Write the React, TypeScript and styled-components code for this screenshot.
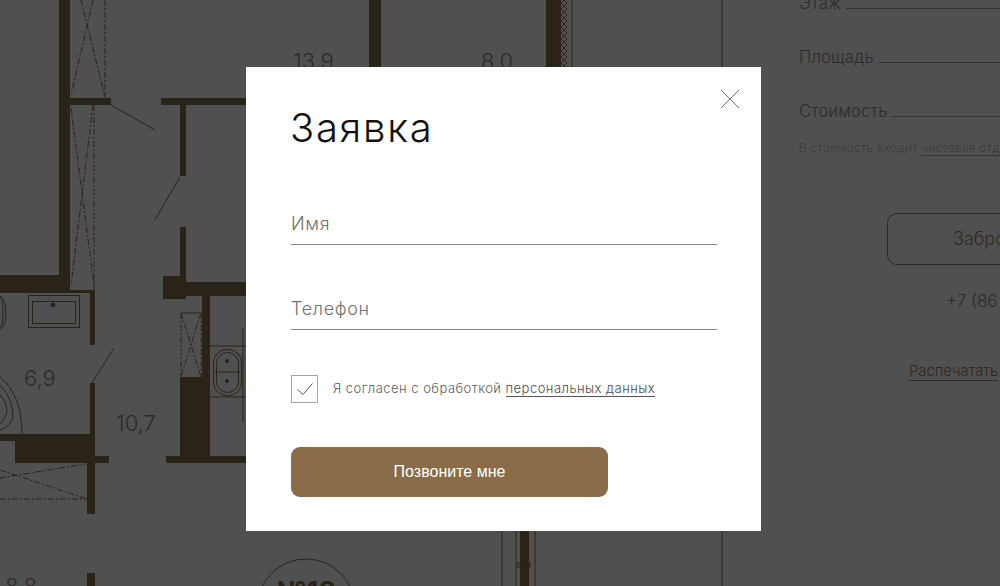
import React from "react";
import styled, { createGlobalStyle } from "styled-components";

const GlobalStyle = createGlobalStyle`
  html, body { margin: 0; padding: 0; background: #505050; }
  * { box-sizing: border-box; }
  body { font-family: "Inter", "Noto Sans", sans-serif; }
`;

const Page = styled.div`
  position: relative;
  display: flex;
  width: 1000px;
  height: 586px;
  overflow: hidden;
  background: #505050;
`;

const PlanSvg = styled.svg`
  display: block;
  flex: none;
  width: 723px;
  height: 586px;
`;

const Sidebar = styled.aside`
  flex: none;
  width: 277px;
  margin-top: -13px;
  padding-left: 76px;
  color: #2b2b2b;
`;

const SpecRow = styled.div`
  display: flex;
  align-items: flex-end;
  gap: 5px;
  width: 260px;
  height: 26px;
  margin-bottom: 28px;
  font-size: 16.6px;
  font-weight: 300;
  letter-spacing: 0.15px;
  white-space: nowrap;
`;

const SpecLine = styled.span`
  flex: 1;
  height: 1px;
  margin-bottom: 4px;
  background: #333;
`;

const Note = styled.p`
  width: 280px;
  margin: -9px 0 0;
  font-size: 12px;
  font-weight: 300;
  letter-spacing: 0.2px;
  line-height: 16px;
  color: #3c3c3c;
  white-space: nowrap;
`;

const NoteLink = styled.span`
  border-bottom: 1px solid #333;
`;

const BookButton = styled.div`
  width: 224px;
  height: 52px;
  margin: 57px 0 0 88px;
  padding-left: 65px;
  border: 1px solid #33291d;
  border-radius: 10px;
  font-size: 18px;
  font-weight: 300;
  line-height: 50px;
  color: #30281e;
  white-space: nowrap;
`;

const Phone = styled.div`
  margin: 26px 0 0 147px;
  font-size: 17px;
  font-weight: 300;
  line-height: 20px;
  white-space: nowrap;
`;

const PrintLink = styled.span`
  display: inline-block;
  margin: 52px 0 0 110px;
  border-bottom: 1px solid #33291d;
  font-size: 14.8px;
  font-weight: 300;
  line-height: 17px;
  color: #30281e;
  white-space: nowrap;
`;

const Overlay = styled.div`
  position: absolute;
  inset: 0;
  padding: 67px 0 0 246px;
`;

const Modal = styled.form`
  position: relative;
  width: 515px;
  height: 464px;
  padding: 36px 44px 0 45px;
  background: #fff;
`;

const CloseButton = styled.button`
  position: absolute;
  top: 22px;
  right: 21px;
  width: 20px;
  height: 20px;
  padding: 0;
  border: 0;
  background: none;
  color: #6f6f6f;
`;

const Title = styled.h1`
  margin: 0 0 49px -1px;
  font-size: 40px;
  font-weight: 300;
  line-height: 50px;
  letter-spacing: 1.7px;
  color: #111;
`;

const Field = styled.input`
  display: block;
  width: 100%;
  height: 43px;
  margin-bottom: 42px;
  padding: 0;
  border: 0;
  border-bottom: 1px solid #8a8a8a;
  outline: none;
  font-family: inherit;
  font-size: 18px;
  font-weight: 300;
  letter-spacing: 0.65px;
  &::placeholder { color: #707070; opacity: 1; }
`;

const Consent = styled.div`
  display: flex;
  align-items: center;
  gap: 15px;
  margin-top: 45px;
  font-size: 13px;
  font-weight: 300;
  letter-spacing: 0.48px;
  color: #5c5c5c;
  white-space: nowrap;
`;

const CheckBox = styled.span`
  display: flex;
  align-items: center;
  justify-content: center;
  flex: none;
  width: 27px;
  height: 28px;
  border: 1px solid #a5a5a5;
`;

const ConsentText = styled.span`
  margin-top: -2px;
`;

const ConsentLink = styled.span`
  border-bottom: 1px solid #555;
  color: #4a4a4a;
`;

const SubmitButton = styled.button`
  display: block;
  width: 317px;
  height: 50px;
  margin-top: 44px;
  border: 0;
  border-radius: 9px;
  background: #8a6d48;
  color: #fff;
  font-family: "Liberation Sans", Arial, sans-serif;
  font-size: 16px;
`;

const wall = "#2a2317";
const thin = "#2a2317";

const walls: [number, number, number, number][] = [
  [59, 0, 11, 293], [0, 275, 70, 18], [70, 98, 41, 7], [161, 98, 85, 7],
  [180, 105, 6, 71], [180, 227, 6, 58], [163, 276, 23, 23], [186, 282, 60, 14],
  [202, 295, 8, 85], [70, 290, 25, 3], [90, 290, 5, 55], [90, 383, 5, 52],
  [0, 434, 95, 7], [15, 434, 80, 29], [95, 456, 14, 7], [87, 463, 8, 51],
  [87, 573, 8, 13], [180, 377, 30, 86], [166, 456, 80, 7],
  [369, 0, 12, 67], [546, 0, 15, 67], [520, 531, 9, 55],
];

const dashedLines: [number, number, number, number][] = [
  [81, 0, 105, 97], [93, 0, 71, 95], [105, 0, 105, 97],
  [71, 108, 94, 285], [93, 105, 71, 285], [94, 105, 94, 290],
  [0, 478, 85, 464], [0, 470, 87, 499], [0, 499, 87, 499],
  [181, 313, 181, 377], [201, 313, 201, 377], [181, 313, 201, 377], [201, 313, 181, 377],
];

const solidLines: [number, number, number, number][] = [
  [111, 105, 155, 130], [180, 177, 155, 220], [92, 383, 114, 348],
  [181, 313, 201, 313], [210, 346, 246, 346], [210, 397, 246, 397], [243, 328, 243, 422],
  [572, 0, 572, 67], [722, 0, 722, 586],
  [502, 531, 502, 586], [516, 531, 516, 586], [535, 531, 535, 586],
];

const areas: [string, number, number][] = [
  ["13,9", 293, 69], ["8,0", 481, 69], ["6,9", 24, 386], ["10,7", 116, 431], ["8,8", 5, 594],
];

const FloorPlan = () => (
  <PlanSvg viewBox="0 0 723 586">
    <defs>
      <pattern id="hatch" width="6" height="6" patternUnits="userSpaceOnUse">
        <path d="M0 0L6 6M6 0L0 6" stroke="#2a2317" strokeWidth="1" />
      </pattern>
    </defs>
    {walls.map(([x, y, w, h], i) => (
      <rect key={i} x={x} y={y} width={w} height={h} fill={wall} />
    ))}
    <rect x="561" y="0" width="6" height="67" fill="url(#hatch)" />
    {dashedLines.map(([x1, y1, x2, y2], i) => (
      <line key={i} x1={x1} y1={y1} x2={x2} y2={y2} stroke={thin} strokeWidth="1" strokeDasharray="6 2 2 2" />
    ))}
    {solidLines.map(([x1, y1, x2, y2], i) => (
      <line key={i} x1={x1} y1={y1} x2={x2} y2={y2} stroke={thin} strokeWidth="1" />
    ))}
    <g fill="none" stroke={thin} strokeWidth="1">
      <rect x="28.5" y="295.5" width="51" height="32" />
      <rect x="32.5" y="301.5" width="43" height="22" />
      <circle cx="53" cy="305" r="2" fill={thin} />
      <path d="M0 296Q6 300 6 313Q6 326 0 330" />
      <path d="M0 296Q3 300 3 313Q3 326 0 328" />
      <path d="M0 377Q22 395 22 434" />
      <path d="M0 385Q13 398 13 418Q8 428 0 430" />
      <path d="M0 395Q7 402 7 412Q5 420 0 424" />
      <rect x="213.5" y="349.5" width="28" height="46" rx="13" />
      <rect x="216.5" y="352.5" width="22" height="40" rx="11" />
      <line x1="215" y1="372" x2="240" y2="372" />
      <circle cx="227" cy="361" r="1.5" fill={thin} />
      <circle cx="227" cy="381" r="1.5" fill={thin} />
      <circle cx="306" cy="608" r="49" />
      <rect x="518" y="563" width="12" height="4" />
    </g>
    {areas.map(([label, x, y]) => (
      <text key={label} x={x} y={y} fontFamily="Inter, sans-serif" fontWeight="300" fontSize="22" fill="#2b2b2b">
        {label}
      </text>
    ))}
    <text x="277" y="601" fontFamily="Inter, sans-serif" fontWeight="700" fontSize="27" fill="#2a2317">№18</text>
  </PlanSvg>
);

const App = () => (
  <Page>
    <GlobalStyle />
    <FloorPlan />
    <Sidebar>
      <SpecRow>Этаж<SpecLine /></SpecRow>
      <SpecRow>Площадь<SpecLine /></SpecRow>
      <SpecRow>Стоимость<SpecLine /></SpecRow>
      <Note>В стоимость входит <NoteLink>чистовая отделка</NoteLink></Note>
      <BookButton>Забронировать</BookButton>
      <Phone>+7 (86</Phone>
      <PrintLink>Распечатать</PrintLink>
    </Sidebar>
    <Overlay>
      <Modal>
        <CloseButton type="button" aria-label="Закрыть">
          <svg width="20" height="20" viewBox="0 0 20 20" fill="none" stroke="currentColor" strokeWidth="1">
            <path d="M1 1L19 19M19 1L1 19" />
          </svg>
        </CloseButton>
        <Title>Заявка</Title>
        <Field placeholder="Имя" />
        <Field placeholder="Телефон" />
        <Consent>
          <CheckBox>
            <svg width="16" height="12" viewBox="0 0 16 12" fill="none" stroke="#555" strokeWidth="1">
              <path d="M0.5 6.5L6 11.5L15.5 0.5" />
            </svg>
          </CheckBox>
          <ConsentText>Я согласен с обработкой <ConsentLink>персональных данных</ConsentLink></ConsentText>
        </Consent>
        <SubmitButton type="button">Позвоните мне</SubmitButton>
      </Modal>
    </Overlay>
  </Page>
);

export default App;
